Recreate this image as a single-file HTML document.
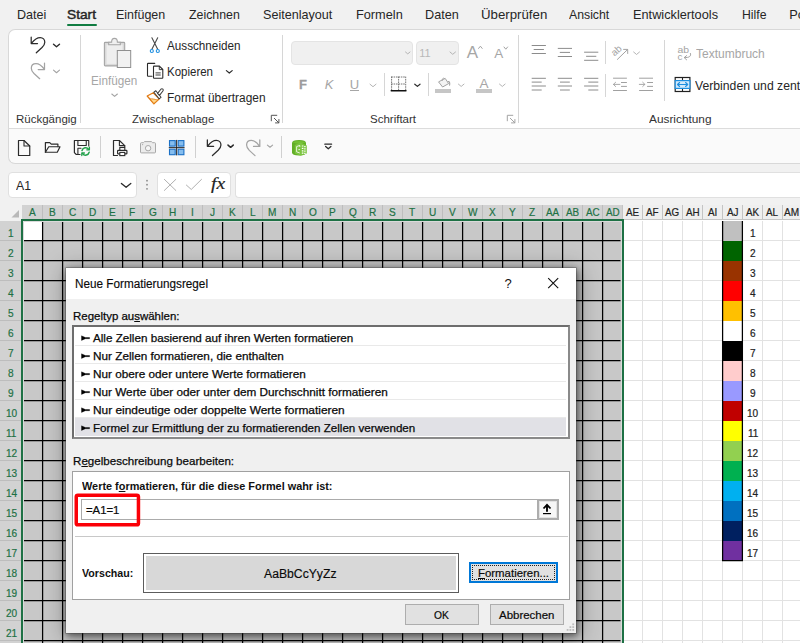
<!DOCTYPE html>
<html lang="de"><head><meta charset="utf-8"><title>Excel - Neue Formatierungsregel</title>
<style>
html,body{margin:0;padding:0;}
html{width:800px;height:643px;overflow:hidden;}
body{width:800px;height:643px;overflow:hidden;position:relative;background:#f1f1f1;font-family:"Liberation Sans",sans-serif;}
#app div{position:absolute;box-sizing:border-box;}
#dlg div{position:absolute;box-sizing:border-box;}
.t{position:absolute;white-space:nowrap;line-height:1;transform-origin:0 0;display:inline-block;}
svg.ov{position:absolute;left:0;top:0;}
#root{position:absolute;left:0;top:0;width:800px;height:643px;overflow:hidden;contain:paint;}
</style></head><body><div id="root">
<div id="app">
<div style="left:8px;top:29px;width:792px;height:100px;background:#fff;border:1px solid #d8d8d8;border-right:0;border-radius:7px 0 0 0;"></div>
<div style="left:8px;top:128px;width:792px;height:36px;background:#fafafa;border:1px solid #d8d8d8;border-right:0;border-top:1px solid #dcdcdc;border-radius:0 0 0 7px;"></div>
<div style="left:67px;top:24px;width:30px;height:2px;background:#107c41;border-radius:1px;"></div>
<div style="left:80px;top:35px;width:1px;height:88px;background:#d6d6d6;"></div>
<div style="left:282px;top:35px;width:1px;height:88px;background:#d6d6d6;"></div>
<div style="left:518px;top:35px;width:1px;height:88px;background:#d6d6d6;"></div>
<div style="left:384px;top:73px;width:1px;height:23px;background:#d6d6d6;"></div>
<div style="left:428px;top:73px;width:1px;height:23px;background:#d6d6d6;"></div>
<div style="left:605px;top:41px;width:1px;height:23px;background:#d6d6d6;"></div>
<div style="left:605px;top:74px;width:1px;height:23px;background:#d6d6d6;"></div>
<div style="left:664px;top:40px;width:1px;height:61px;background:#d6d6d6;"></div>
<div style="left:291px;top:41px;width:122px;height:24px;background:#f0f0f0;border:1px solid #e4e4e4;border-radius:4px;"></div>
<div style="left:416px;top:41px;width:43px;height:24px;background:#f0f0f0;border:1px solid #e4e4e4;border-radius:4px;"></div>
<div style="left:350px;top:90px;width:9px;height:1px;background:#a6a6a6;"></div>
<div style="left:476px;top:89px;width:16px;height:4px;background:#c6c6c6;"></div>
<div style="left:435px;top:89px;width:16px;height:4px;background:#c6c6c6;"></div>
<div style="left:8px;top:172px;width:129px;height:26px;background:#fff;border:1px solid #e0e0e0;border-radius:4px;"></div>
<div style="left:157px;top:172px;width:74px;height:26px;background:#fff;border:1px solid #e0e0e0;border-radius:4px;"></div>
<div style="left:235px;top:172px;width:565px;height:26px;background:#fff;border:1px solid #e0e0e0;border-right:0;border-radius:4px 0 0 4px;"></div>
<div style="left:22px;top:205px;width:601px;height:15px;background:#d2d2d2;"></div>
<div style="left:623px;top:205px;width:177px;height:15px;background:#efefef;"></div>
<div style="left:624px;top:219px;width:176px;height:2px;background:#c6c6c6;"></div>
<div style="left:0px;top:221px;width:22px;height:422px;background:#d2d2d2;"></div>
<div style="left:22px;top:220px;width:601px;height:423px;background:#c8c8c8;"></div>
<div style="left:23px;top:221px;width:19px;height:19px;background:#fff;"></div>
<div style="left:624px;top:220px;width:176px;height:423px;background:#fff;"></div>
<div style="left:100px;top:136px;width:1px;height:22px;background:#d0d0d0;"></div>
<div style="left:195px;top:136px;width:1px;height:22px;background:#d0d0d0;"></div>
<div style="left:281px;top:136px;width:1px;height:22px;background:#d0d0d0;"></div>
</div>
<svg class="ov" width="800" height="643" viewBox="0 0 800 643">
<path d="M19 210 L19 217.5 L11.5 217.5 Z" fill="#b9b9b9"/>
<path d="M42.5 205V220M62.5 205V220M82.5 205V220M102.5 205V220M122.5 205V220M142.5 205V220M162.5 205V220M182.5 205V220M202.5 205V220M222.5 205V220M242.5 205V220M262.5 205V220M282.5 205V220M302.5 205V220M322.5 205V220M342.5 205V220M362.5 205V220M382.5 205V220M402.5 205V220M422.5 205V220M442.5 205V220M462.5 205V220M482.5 205V220M502.5 205V220M522.5 205V220M542.5 205V220M562.5 205V220M582.5 205V220M602.5 205V220" stroke="#bdbdbd" stroke-width="1" fill="none"/>
<path d="M622.5 205V220M642.5 205V220M662.5 205V220M682.5 205V220M702.5 205V220M722.5 205V220M742.5 205V220M762.5 205V220M782.5 205V220M802.5 205V220" stroke="#c4c4c4" stroke-width="1" fill="none"/>
<path d="M0 240.5H21M0 260.5H21M0 280.5H21M0 300.5H21M0 320.5H21M0 340.5H21M0 360.5H21M0 380.5H21M0 400.5H21M0 420.5H21M0 440.5H21M0 460.5H21M0 480.5H21M0 500.5H21M0 520.5H21M0 540.5H21M0 560.5H21M0 580.5H21M0 600.5H21M0 620.5H21M0 640.5H21" stroke="#bdbdbd" stroke-width="1" fill="none"/>
<path d="M642.5 221V643M662.5 221V643M682.5 221V643M702.5 221V643M722.5 221V643M742.5 221V643M762.5 221V643M782.5 221V643M802.5 221V643M624 240.5H800M624 260.5H800M624 280.5H800M624 300.5H800M624 320.5H800M624 340.5H800M624 360.5H800M624 380.5H800M624 400.5H800M624 420.5H800M624 440.5H800M624 460.5H800M624 480.5H800M624 500.5H800M624 520.5H800M624 540.5H800M624 560.5H800M624 580.5H800M624 600.5H800M624 620.5H800M624 640.5H800" stroke="#e2e2e2" stroke-width="1" fill="none"/>
<path d="M42.6 222V643M62.6 222V643M82.6 222V643M102.6 222V643M122.6 222V643M142.6 222V643M162.6 222V643M182.6 222V643M202.6 222V643M222.6 222V643M242.6 222V643M262.6 222V643M282.6 222V643M302.6 222V643M322.6 222V643M342.6 222V643M362.6 222V643M382.6 222V643M402.6 222V643M422.6 222V643M442.6 222V643M462.6 222V643M482.6 222V643M502.6 222V643M522.6 222V643M542.6 222V643M562.6 222V643M582.6 222V643M602.6 222V643M24 240.6H620.5M24 260.6H620.5M24 280.6H620.5M24 300.6H620.5M24 320.6H620.5M24 340.6H620.5M24 360.6H620.5M24 380.6H620.5M24 400.6H620.5M24 420.6H620.5M24 440.6H620.5M24 460.6H620.5M24 480.6H620.5M24 500.6H620.5M24 520.6H620.5M24 540.6H620.5M24 560.6H620.5M24 580.6H620.5M24 600.6H620.5M24 620.6H620.5M24 640.6H620.5" stroke="#000" stroke-width="1.25" fill="none"/>
<path d="M23.5 643V221.5H621.5V643" stroke="#dadada" stroke-width="1" fill="none"/>
<path d="M22 643V220H623V643" stroke="#1e7145" stroke-width="2" fill="none"/>
<rect x="723" y="221" width="19.4" height="20.2" fill="#c0c0c0"/>
<rect x="723" y="241" width="19.4" height="20.2" fill="#006400"/>
<rect x="723" y="261" width="19.4" height="20.2" fill="#993300"/>
<rect x="723" y="281" width="19.4" height="20.2" fill="#ff0000"/>
<rect x="723" y="301" width="19.4" height="20.2" fill="#ffc000"/>
<rect x="723" y="321" width="19.4" height="20.2" fill="#ffffff"/>
<rect x="723" y="341" width="19.4" height="20.2" fill="#000000"/>
<rect x="723" y="361" width="19.4" height="20.2" fill="#ffcccc"/>
<rect x="723" y="381" width="19.4" height="20.2" fill="#9999ff"/>
<rect x="723" y="401" width="19.4" height="20.2" fill="#c00000"/>
<rect x="723" y="421" width="19.4" height="20.2" fill="#ffff00"/>
<rect x="723" y="441" width="19.4" height="20.2" fill="#92d050"/>
<rect x="723" y="461" width="19.4" height="20.2" fill="#00b050"/>
<rect x="723" y="481" width="19.4" height="20.2" fill="#00b0f0"/>
<rect x="723" y="501" width="19.4" height="20.2" fill="#0070c0"/>
<rect x="723" y="521" width="19.4" height="20.2" fill="#002060"/>
<rect x="723" y="541" width="19.4" height="19.2" fill="#7030a0"/>
<path d="M722.6 221V561M742.4 221V561M722 560.5H743" stroke="#000" stroke-width="1.25" fill="none"/>
<path d="M31.2 37.2V43.5H37.5M31.6 43.2C34 40 37 37.5 40.2 37.5C43 37.5 44.8 39.6 44.8 42.2C44.8 44.5 43.5 46 42 47.5L36.3 52.8" stroke="#2b2b2b" stroke-width="1.25" fill="none" stroke-linecap="round" stroke-linejoin="round" />
<path d="M53.5 44.2L56.5 46.720000000000006L59.5 44.2" stroke="#2b2b2b" stroke-width="1.4" fill="none" stroke-linecap="round" stroke-linejoin="round" />
<path d="M44.5 63V69.5H38.2M44.2 69.2C42 66 39 63.5 36 63.5C33 63.5 31.3 65.6 31.3 68.2C31.3 70.5 32.5 72 34 73.5L39.7 78.7" stroke="#a3a3a3" stroke-width="1.25" fill="none" stroke-linecap="round" stroke-linejoin="round" />
<path d="M53.5 70.2L56.5 72.72L59.5 70.2" stroke="#a3a3a3" stroke-width="1.1" fill="none" stroke-linecap="round" stroke-linejoin="round" />
<path d="M207.35 139.95V146.25H213.65M207.75 145.95C210.15 142.75 213.15 140.25 216.35000000000002 140.25C219.15 140.25 220.95 142.35 220.95 144.95C220.95 147.25 219.65 148.75 218.15 150.25L212.45 155.55" stroke="#2b2b2b" stroke-width="1.25" fill="none" stroke-linecap="round" stroke-linejoin="round" />
<path d="M228 145.1L230.625 147.305L233.25 145.1" stroke="#2b2b2b" stroke-width="1.5" fill="none" stroke-linecap="round" stroke-linejoin="round" />
<path d="M259.8 139.9V146.4H253.5M259.5 146.10000000000002C257.3 142.9 254.3 140.4 251.3 140.4C248.3 140.4 246.60000000000002 142.5 246.60000000000002 145.10000000000002C246.60000000000002 147.4 247.8 148.9 249.3 150.4L255.0 155.60000000000002" stroke="#a3a3a3" stroke-width="1.25" fill="none" stroke-linecap="round" stroke-linejoin="round" />
<path d="M267.4 145.1L270.0 147.28400000000002L272.6 145.1" stroke="#a3a3a3" stroke-width="1.1" fill="none" stroke-linecap="round" stroke-linejoin="round" />
<rect x="104.4" y="42.4" width="20.3" height="23.5" rx="0.8" fill="#d9d9d9" stroke="#a6a6a6" stroke-width="1.1"/>
<rect x="106.5" y="44.6" width="16.1" height="19.3" fill="#eeeeee"/>
<path d="M108.7 44.8V42.2H111.6C111.6 40.2 112.8 38.4 114.5 38.4C116.2 38.4 117.4 40.2 117.4 42.2H120.3V44.8Z" fill="#f0f0f0" stroke="#a6a6a6" stroke-width="1.1"/>
<rect x="117.3" y="50.5" width="13.4" height="17" fill="#f1f1f1" stroke="#8f8f8f" stroke-width="1"/>
<path d="M111.8 94L114.6 96.352L117.4 94" stroke="#a3a3a3" stroke-width="1.1" fill="none" stroke-linecap="round" stroke-linejoin="round" />
<path d="M151.9 37.8L157.7 49.2M157.7 37.8L151.9 49.2" stroke="#4a4a4a" stroke-width="1.1" fill="none" stroke-linecap="round" stroke-linejoin="round" />
<circle cx="151.8" cy="51" r="1.55" fill="#fff" stroke="#1e8fe0" stroke-width="1.1"/><circle cx="157.8" cy="51" r="1.55" fill="#fff" stroke="#1e8fe0" stroke-width="1.1"/>
<path d="M154.7 63.4H148.1Q147.5 63.4 147.5 64V75.7Q147.5 76.3 148.1 76.3H152" stroke="#2b2b2b" stroke-width="1.1" fill="none" stroke-linecap="round" stroke-linejoin="round" />
<path d="M153.5 66.7Q153.5 66.1 154.1 66.1H159.4L162.8 69.5V77.7Q162.8 78.3 162.2 78.3H154.1Q153.5 78.3 153.5 77.7Z" stroke="#2b2b2b" stroke-width="1.1" fill="#fff" stroke-linecap="round" stroke-linejoin="round" />
<path d="M159.3 66.3V69.6H162.6" stroke="#2b2b2b" stroke-width="0.9" fill="none" stroke-linecap="round" stroke-linejoin="round" />
<path d="M155.9 72.9H160.3M155.9 75H160.3" stroke="#2b2b2b" stroke-width="0.9" fill="none" stroke-linecap="round" stroke-linejoin="round" />
<path d="M226.4 70.6L229.3 73.03599999999999L232.2 70.6" stroke="#2b2b2b" stroke-width="1.2" fill="none" stroke-linecap="round" stroke-linejoin="round" />
<path d="M153.3 92.7L147.2 96L153.9 103.7L159.1 98.9Z" fill="#fff" stroke="#e27a12" stroke-width="1.3" stroke-linejoin="round"/>
<path d="M150 98.9C152.4 98.6 155.2 99.4 157.8 100.1L153.9 103.5Z" fill="#ffd78a" stroke="#e27a12" stroke-width="0.8" stroke-linejoin="round"/>
<path d="M153.9 92.2L155.8 90.7L161 97.3L159.1 98.8Z" fill="#fff" stroke="#3c3c3c" stroke-width="1.05" stroke-linejoin="round"/>
<path d="M157.6 93.4L160.9 89.2Q161.9 88.3 162.9 89.1Q163.7 90 162.9 91L159.5 95.3Z" fill="#fff" stroke="#3c3c3c" stroke-width="1.05" stroke-linejoin="round"/>
<path d="M271.3 120.8V115.3H276.8" stroke="#555" stroke-width="1" fill="none" stroke-linecap="round" stroke-linejoin="round" />
<path d="M274.3 118.3L278.8 122.8M275.5 122.89999999999999H278.90000000000003V119.5" stroke="#555" stroke-width="1" fill="none" stroke-linecap="round" stroke-linejoin="round" />
<path d="M507.3 120.8V115.3H512.8" stroke="#a3a3a3" stroke-width="1" fill="none" stroke-linecap="round" stroke-linejoin="round" />
<path d="M510.3 118.3L514.8 122.8M511.5 122.89999999999999H514.9V119.5" stroke="#a3a3a3" stroke-width="1" fill="none" stroke-linecap="round" stroke-linejoin="round" />
<path d="M405.5 52L407.75 53.89L410 52" stroke="#adadad" stroke-width="0.9" fill="none" stroke-linecap="round" stroke-linejoin="round" />
<path d="M450 52L452.75 54.31L455.5 52" stroke="#adadad" stroke-width="0.9" fill="none" stroke-linecap="round" stroke-linejoin="round" />
<path d="M370 84.2L373.0 86.72L376 84.2" stroke="#adadad" stroke-width="0.9" fill="none" stroke-linecap="round" stroke-linejoin="round" />
<path d="M478.6 48.4L480.4 46.199999999999996L482.2 48.4" stroke="#a3a3a3" stroke-width="1.0" fill="none" stroke-linecap="round" stroke-linejoin="round" />
<path d="M504 47L505.8 49.2L507.6 47" stroke="#a3a3a3" stroke-width="1.0" fill="none" stroke-linecap="round" stroke-linejoin="round" />
<path d="M391.6 77H405.7M391.6 84H405.7M391.6 77V90M398.6 77V90M405.7 77V90" stroke="#666" stroke-width="0.9" fill="none" stroke-linecap="round" stroke-linejoin="round" stroke-dasharray="0.8 1.6" stroke-linecap="butt"/>
<path d="M391.2 90.8H406" stroke="#111" stroke-width="1.4" fill="none" stroke-linecap="round" stroke-linejoin="round" />
<path d="M414.8 84.2L417.4 86.384L420 84.2" stroke="#2b2b2b" stroke-width="1.25" fill="none" stroke-linecap="round" stroke-linejoin="round" />
<path d="M441.3 80.4L445.2 78.4L448.6 83.6L442.6 87L438.8 82.2Z" stroke="#a3a3a3" stroke-width="1.0" fill="#f4f4f4" stroke-linecap="round" stroke-linejoin="round" />
<path d="M442.2 80.6C442 78.4 443.4 77.4 444.6 78.6" stroke="#a3a3a3" stroke-width="0.9" fill="none" stroke-linecap="round" stroke-linejoin="round" />
<path d="M448.2 81.6C449.6 81 450 83.4 449.6 85.2" stroke="#a3a3a3" stroke-width="1.1" fill="none" stroke-linecap="round" stroke-linejoin="round" />
<path d="M458.4 84.1L461.2 86.452L464 84.1" stroke="#adadad" stroke-width="0.9" fill="none" stroke-linecap="round" stroke-linejoin="round" />
<path d="M499.5 84.1L502.3 86.452L505.1 84.1" stroke="#adadad" stroke-width="0.9" fill="none" stroke-linecap="round" stroke-linejoin="round" />
<path d="M531.7 45.5H545.9000000000001" stroke="#8c8c8c" stroke-width="1.0" fill="none"/>
<path d="M533.7 49.5H543.9000000000001" stroke="#8c8c8c" stroke-width="1.0" fill="none"/>
<path d="M531.7 53.5H545.9000000000001" stroke="#8c8c8c" stroke-width="1.0" fill="none"/>
<path d="M557.8 48.4H572.0" stroke="#8c8c8c" stroke-width="1.0" fill="none"/>
<path d="M559.8 52.4H570.0" stroke="#8c8c8c" stroke-width="1.0" fill="none"/>
<path d="M557.8 56.5H572.0" stroke="#8c8c8c" stroke-width="1.0" fill="none"/>
<path d="M584.1 52.2H598.3000000000001" stroke="#8c8c8c" stroke-width="1.0" fill="none"/>
<path d="M586.1 56.3H596.3000000000001" stroke="#8c8c8c" stroke-width="1.0" fill="none"/>
<path d="M584.1 60.3H598.3000000000001" stroke="#8c8c8c" stroke-width="1.0" fill="none"/>
<path d="M531.7 78.3H545.9000000000001" stroke="#8c8c8c" stroke-width="1.0" fill="none"/>
<path d="M531.7 82.1H541.7" stroke="#8c8c8c" stroke-width="1.0" fill="none"/>
<path d="M531.7 86H545.9000000000001" stroke="#8c8c8c" stroke-width="1.0" fill="none"/>
<path d="M531.7 90H541.7" stroke="#8c8c8c" stroke-width="1.0" fill="none"/>
<path d="M557.8 78.3H572.0" stroke="#8c8c8c" stroke-width="1.0" fill="none"/>
<path d="M560.0 82.1H569.8" stroke="#8c8c8c" stroke-width="1.0" fill="none"/>
<path d="M557.8 86H572.0" stroke="#8c8c8c" stroke-width="1.0" fill="none"/>
<path d="M560.0 90H569.8" stroke="#8c8c8c" stroke-width="1.0" fill="none"/>
<path d="M584.1 78.3H598.3000000000001" stroke="#8c8c8c" stroke-width="1.0" fill="none"/>
<path d="M588.3000000000001 82.1H598.3000000000001" stroke="#8c8c8c" stroke-width="1.0" fill="none"/>
<path d="M584.1 86H598.3000000000001" stroke="#8c8c8c" stroke-width="1.0" fill="none"/>
<path d="M588.3000000000001 90H598.3000000000001" stroke="#8c8c8c" stroke-width="1.0" fill="none"/>
<path d="M617.4 59.4L627.5 49.6M623.6 49.4H627.7V53.5" stroke="#a3a3a3" stroke-width="1.0" fill="none" stroke-linecap="round" stroke-linejoin="round" />
<text x="0" y="0" transform="translate(614.6 56.6) rotate(-42)" font-family="Liberation Sans, sans-serif" font-size="9.6" fill="#a3a3a3">ab</text>
<path d="M633.6 52L636.55 54.47799999999999L639.5 52" stroke="#adadad" stroke-width="0.9" fill="none" stroke-linecap="round" stroke-linejoin="round" />
<path d="M613.05 78.2H626.9" stroke="#a0a0a0" stroke-width="1.0" fill="none"/>
<path d="M613.05 90.5H626.9" stroke="#a0a0a0" stroke-width="1.0" fill="none"/>
<path d="M621 82.5H626.9" stroke="#a0a0a0" stroke-width="1.0" fill="none"/>
<path d="M621 86.4H626.9" stroke="#a0a0a0" stroke-width="1.0" fill="none"/>
<path d="M619.9 84.4H613.5M615.6 82.3L613.4 84.4L615.6 86.5" stroke="#a0a0a0" stroke-width="0.9" fill="none" stroke-linecap="round" stroke-linejoin="round" />
<path d="M639.1 78.2H653" stroke="#a0a0a0" stroke-width="1.0" fill="none"/>
<path d="M639.1 90.5H653" stroke="#a0a0a0" stroke-width="1.0" fill="none"/>
<path d="M647.1 82.5H653" stroke="#a0a0a0" stroke-width="1.0" fill="none"/>
<path d="M647.1 86.4H653" stroke="#a0a0a0" stroke-width="1.0" fill="none"/>
<path d="M639.3 84.4H644.8M642.7 82.3L644.9 84.4L642.7 86.5" stroke="#a0a0a0" stroke-width="0.9" fill="none" stroke-linecap="round" stroke-linejoin="round" />
<text x="677.4" y="53.1" font-family="Liberation Sans, sans-serif" font-size="9.8" fill="#a3a3a3" textLength="11.6" lengthAdjust="spacingAndGlyphs">ab</text>
<text x="677.4" y="60" font-family="Liberation Sans, sans-serif" font-size="9.8" fill="#a3a3a3">c</text>
<path d="M690.4 53.4C691.4 56 689.6 57.8 684.4 57.6M686.6 55.6L684.2 57.6L686.6 59.8" stroke="#a3a3a3" stroke-width="1.0" fill="none" stroke-linecap="round" stroke-linejoin="round" />
<rect x="675.2" y="77.5" width="14.7" height="14" fill="#fff" stroke="#222" stroke-width="1.2"/>
<path d="M682.5 77.5V80.5M682.5 88.4V91.5" stroke="#222" stroke-width="1.1" fill="none" stroke-linecap="round" stroke-linejoin="round" />
<rect x="675.2" y="80.6" width="14.7" height="7.8" fill="#d4eafb" stroke="#1e8fe0" stroke-width="1.2"/>
<path d="M677.6 84.5H687.6M679.6 82.5L677.5 84.5L679.6 86.5M685.6 82.5L687.7 84.5L685.6 86.5" stroke="#1e8fe0" stroke-width="1.1" fill="none" stroke-linecap="round" stroke-linejoin="round" />
<path d="M18.5 140.5H24L29.75 146V155.5H18.5Z" stroke="#2b2b2b" stroke-width="1.2" fill="none" stroke-linecap="round" stroke-linejoin="round" />
<path d="M24 140.6V146H29.7" stroke="#2b2b2b" stroke-width="1.1" fill="none" stroke-linecap="round" stroke-linejoin="round" />
<path d="M45.4 152.2V142.6H49.75L51.25 144.1H57.9V146.6" stroke="#2b2b2b" stroke-width="1.2" fill="none" stroke-linecap="round" stroke-linejoin="round" />
<path d="M45.4 152.25L48.75 146.75H60L57.25 152.25Z" stroke="#2b2b2b" stroke-width="1.2" fill="none" stroke-linecap="round" stroke-linejoin="round" />
<path d="M84 140.5H74.4V152.6L76.3 154.5H80" stroke="#2b2b2b" stroke-width="1.2" fill="none" stroke-linecap="round" stroke-linejoin="round" />
<path d="M88.75 140.5V146M84 140.5H88.75M77.9 140.5V145.5H86.25V140.5M77.9 154.5V148.25H81" stroke="#2b2b2b" stroke-width="1.1" fill="none" stroke-linecap="round" stroke-linejoin="round" />
<path d="M82 150.6A3.7 3.7 0 0 1 88.6 149.2M89.2 152.2A3.7 3.7 0 0 1 82.6 153.6" stroke="#21a04a" stroke-width="1.5" fill="none" stroke-linecap="round" stroke-linejoin="round" />
<path d="M89.4 147.2V149.8H86.8M81.8 155.6V153H84.4" stroke="#21a04a" stroke-width="1.3" fill="none" stroke-linecap="round" stroke-linejoin="round" />
<path d="M117.5 155.5H113.5V140.5H119.4L124.75 145.6V146.8" stroke="#2b2b2b" stroke-width="1.2" fill="none" stroke-linecap="round" stroke-linejoin="round" />
<path d="M119.4 140.6V145.6H124.7" stroke="#2b2b2b" stroke-width="1.1" fill="none" stroke-linecap="round" stroke-linejoin="round" />
<rect x="119.8" y="147.5" width="5" height="3.4" fill="#fff" stroke="#2b2b2b" stroke-width="1.1"/>
<rect x="117.6" y="150.4" width="9.3" height="3.4" rx="0.6" fill="#fff" stroke="#2b2b2b" stroke-width="1.2"/>
<rect x="119.8" y="152.4" width="5" height="3.2" fill="#fff" stroke="#2b2b2b" stroke-width="1.1"/>
<path d="M140.5 143.6Q140.5 142.7 141.4 142.7H143.4L144.6 141.6H151.4L152.6 142.7H154.6Q155.5 142.7 155.5 143.6V152Q155.5 152.9 154.6 152.9H141.4Q140.5 152.9 140.5 152Z" fill="#ececec" stroke="#a8a8a8" stroke-width="1"/>
<circle cx="148.1" cy="148.2" r="2.7" fill="#f6f6f6" stroke="#a8a8a8" stroke-width="1"/><circle cx="142.6" cy="144.6" r="0.6" fill="#a8a8a8"/>
<rect x="169.5" y="140.6" width="5.7" height="5.5" fill="#85bdee" stroke="#1b70c6" stroke-width="1.1"/>
<rect x="178.2" y="140.6" width="5.7" height="5.5" fill="#85bdee" stroke="#1b70c6" stroke-width="1.1"/>
<rect x="169.5" y="149.2" width="5.7" height="5.5" fill="#85bdee" stroke="#1b70c6" stroke-width="1.1"/>
<rect x="178.2" y="149.2" width="5.7" height="5.5" fill="#85bdee" stroke="#1b70c6" stroke-width="1.1"/>
<path d="M176.65 140.3V155M169.2 147.65H184.2" stroke="#222" stroke-width="1.0" fill="none" stroke-linecap="round" stroke-linejoin="round" />
<path d="M292 143Q292 140 299 140Q306 140 306 143V152.6Q306 155.6 299 155.6Q292 155.6 292 152.6Z" fill="#62ae26"/>
<path d="M292.6 142.2Q299 139.6 305.6 142.2Q299 145.2 292.6 142.2Z" fill="#74c034"/>
<path d="M294.8 145L300.6 142.6L306.8 145.6V153.4L300.6 155.8L294.8 153.4Z" fill="#7cc540"/>
<path d="M296.6 146.6L299.8 145.4V147M296.6 146.6V151.8L299.8 153M298.4 149.6H300" stroke="#fff" stroke-width="0.8" fill="none"/>
<path d="M301.8 146H303.4M304.2 146.6H305.6M301.8 148.4H303.4M304.2 148.9H305.6M301.8 150.8H303.4M304.2 151.2H305.6M301.8 153.2H303.4M304.2 153.4H305.6" stroke="#fff" stroke-width="1.2" fill="none"/>
<path d="M324.8 144.2H331.6" stroke="#2b2b2b" stroke-width="1.2" fill="none" stroke-linecap="round" stroke-linejoin="round" />
<path d="M325.65 146.5L328.275 148.705L330.9 146.5" stroke="#2b2b2b" stroke-width="1.3" fill="none" stroke-linecap="round" stroke-linejoin="round" />
<path d="M121.4 183.4L126.10000000000001 187.348L130.8 183.4" stroke="#2b2b2b" stroke-width="1.3" fill="none" stroke-linecap="round" stroke-linejoin="round" />
<circle cx="147" cy="180.7" r="0.9" fill="#8a8a8a"/><circle cx="147" cy="184.7" r="0.9" fill="#8a8a8a"/><circle cx="147" cy="188.8" r="0.9" fill="#8a8a8a"/>
<path d="M164.4 179.4L175.8 190.4M175.8 179.4L164.4 190.4" stroke="#b0b0b0" stroke-width="1.0" fill="none" stroke-linecap="round" stroke-linejoin="round" />
<path d="M186.4 185.1L191.25 189.45L201.5 179.4" stroke="#b0b0b0" stroke-width="1.0" fill="none" stroke-linecap="round" stroke-linejoin="round" />
</svg>
<span class="t" style="left:16.50px;top:9.25px;font-size:12.8px;color:#262626;font-weight:normal;font-style:normal;font-family:'Liberation Sans', sans-serif;transform:scaleX(0.9791);">Datei</span>
<span class="t" style="left:67.00px;top:9.25px;font-size:12.8px;color:#262626;font-weight:normal;font-style:normal;font-family:'Liberation Sans', sans-serif;transform:scaleX(1.0728);-webkit-text-stroke:0.45px #262626;">Start</span>
<span class="t" style="left:116.25px;top:9.25px;font-size:12.8px;color:#262626;font-weight:normal;font-style:normal;font-family:'Liberation Sans', sans-serif;transform:scaleX(0.9746);">Einfügen</span>
<span class="t" style="left:188.75px;top:9.25px;font-size:12.8px;color:#262626;font-weight:normal;font-style:normal;font-family:'Liberation Sans', sans-serif;transform:scaleX(0.9638);">Zeichnen</span>
<span class="t" style="left:263.25px;top:9.25px;font-size:12.8px;color:#262626;font-weight:normal;font-style:normal;font-family:'Liberation Sans', sans-serif;transform:scaleX(0.9831);">Seitenlayout</span>
<span class="t" style="left:356.25px;top:9.25px;font-size:12.8px;color:#262626;font-weight:normal;font-style:normal;font-family:'Liberation Sans', sans-serif;transform:scaleX(0.9960);">Formeln</span>
<span class="t" style="left:425.00px;top:9.25px;font-size:12.8px;color:#262626;font-weight:normal;font-style:normal;font-family:'Liberation Sans', sans-serif;transform:scaleX(0.9881);">Daten</span>
<span class="t" style="left:480.50px;top:9.25px;font-size:12.8px;color:#262626;font-weight:normal;font-style:normal;font-family:'Liberation Sans', sans-serif;transform:scaleX(1.0347);">Überprüfen</span>
<span class="t" style="left:569.25px;top:9.25px;font-size:12.8px;color:#262626;font-weight:normal;font-style:normal;font-family:'Liberation Sans', sans-serif;transform:scaleX(0.9590);">Ansicht</span>
<span class="t" style="left:633.25px;top:9.25px;font-size:12.8px;color:#262626;font-weight:normal;font-style:normal;font-family:'Liberation Sans', sans-serif;transform:scaleX(0.9960);">Entwicklertools</span>
<span class="t" style="left:741.75px;top:9.25px;font-size:12.8px;color:#262626;font-weight:normal;font-style:normal;font-family:'Liberation Sans', sans-serif;transform:scaleX(0.9567);">Hilfe</span>
<span class="t" style="left:789.25px;top:9.25px;font-size:12.8px;color:#262626;font-weight:normal;font-style:normal;font-family:'Liberation Sans', sans-serif;">Power</span>
<span class="t" style="left:15.50px;top:113.50px;font-size:11.5px;color:#333;font-weight:normal;font-style:normal;font-family:'Liberation Sans', sans-serif;transform:scaleX(1.0003);">Rückgängig</span>
<span class="t" style="left:132.00px;top:113.50px;font-size:11.5px;color:#333;font-weight:normal;font-style:normal;font-family:'Liberation Sans', sans-serif;transform:scaleX(0.9897);">Zwischenablage</span>
<span class="t" style="left:369.50px;top:113.50px;font-size:11.5px;color:#333;font-weight:normal;font-style:normal;font-family:'Liberation Sans', sans-serif;transform:scaleX(0.9997);">Schriftart</span>
<span class="t" style="left:649.25px;top:113.50px;font-size:11.5px;color:#333;font-weight:normal;font-style:normal;font-family:'Liberation Sans', sans-serif;transform:scaleX(1.0291);">Ausrichtung</span>
<span class="t" style="left:91.25px;top:74.50px;font-size:12.5px;color:#a6a6a6;font-weight:normal;font-style:normal;font-family:'Liberation Sans', sans-serif;transform:scaleX(0.9370);">Einfügen</span>
<span class="t" style="left:167.00px;top:40.00px;font-size:12.5px;color:#262626;font-weight:normal;font-style:normal;font-family:'Liberation Sans', sans-serif;transform:scaleX(0.9359);">Ausschneiden</span>
<span class="t" style="left:167.00px;top:66.25px;font-size:12.5px;color:#262626;font-weight:normal;font-style:normal;font-family:'Liberation Sans', sans-serif;transform:scaleX(0.9191);">Kopieren</span>
<span class="t" style="left:167.00px;top:92.00px;font-size:12.5px;color:#262626;font-weight:normal;font-style:normal;font-family:'Liberation Sans', sans-serif;transform:scaleX(0.9514);">Format übertragen</span>
<span class="t" style="left:419.29px;top:47.80px;font-size:11px;color:#b8b8b8;font-weight:normal;font-style:normal;font-family:'Liberation Sans', sans-serif;">11</span>
<span class="t" style="left:299.02px;top:77.75px;font-size:13px;color:#9c9c9c;font-weight:bold;font-style:normal;font-family:'Liberation Sans', sans-serif;-webkit-text-stroke:0.3px #9c9c9c;">F</span>
<span class="t" style="left:324.66px;top:77.75px;font-size:13px;color:#a6a6a6;font-weight:normal;font-style:italic;font-family:'Liberation Sans', sans-serif;">K</span>
<span class="t" style="left:349.70px;top:77.75px;font-size:13px;color:#a6a6a6;font-weight:normal;font-style:normal;font-family:'Liberation Sans', sans-serif;">U</span>
<span class="t" style="left:466.63px;top:44.00px;font-size:17px;color:#a6a6a6;font-weight:normal;font-style:normal;font-family:'Liberation Sans', sans-serif;">A</span>
<span class="t" style="left:494.29px;top:47.00px;font-size:13.5px;color:#a6a6a6;font-weight:normal;font-style:normal;font-family:'Liberation Sans', sans-serif;">A</span>
<span class="t" style="left:479.49px;top:76.50px;font-size:13.5px;color:#a6a6a6;font-weight:normal;font-style:normal;font-family:'Liberation Sans', sans-serif;">A</span>
<span class="t" style="left:695.75px;top:48.25px;font-size:12.5px;color:#a6a6a6;font-weight:normal;font-style:normal;font-family:'Liberation Sans', sans-serif;transform:scaleX(0.9607);">Textumbruch</span>
<span class="t" style="left:695.00px;top:80.00px;font-size:12.5px;color:#262626;font-weight:normal;font-style:normal;font-family:'Liberation Sans', sans-serif;transform:scaleX(0.9760);">Verbinden und zentrieren</span>
<span class="t" style="left:15.50px;top:180.00px;font-size:12.3px;color:#262626;font-weight:normal;font-style:normal;font-family:'Liberation Sans', sans-serif;transform:scaleX(0.9969);">A1</span>
<span class="t" style="left:211.20px;top:175.20px;font-size:17.5px;color:#222;font-weight:normal;font-style:italic;font-family:'Liberation Serif', serif;transform:scaleX(1.1200);-webkit-text-stroke:0.2px #222;">fx</span>
<span class="t" style="left:29.14px;top:207.00px;font-size:10.6px;color:#1e7145;font-weight:normal;font-style:normal;font-family:'Liberation Sans', sans-serif;transform:scaleX(0.9500);-webkit-text-stroke:0.2px #1e7145;">A</span>
<span class="t" style="left:49.14px;top:207.00px;font-size:10.6px;color:#1e7145;font-weight:normal;font-style:normal;font-family:'Liberation Sans', sans-serif;transform:scaleX(0.9500);-webkit-text-stroke:0.2px #1e7145;">B</span>
<span class="t" style="left:68.86px;top:207.00px;font-size:10.6px;color:#1e7145;font-weight:normal;font-style:normal;font-family:'Liberation Sans', sans-serif;transform:scaleX(0.9500);-webkit-text-stroke:0.2px #1e7145;">C</span>
<span class="t" style="left:88.86px;top:207.00px;font-size:10.6px;color:#1e7145;font-weight:normal;font-style:normal;font-family:'Liberation Sans', sans-serif;transform:scaleX(0.9500);-webkit-text-stroke:0.2px #1e7145;">D</span>
<span class="t" style="left:109.14px;top:207.00px;font-size:10.6px;color:#1e7145;font-weight:normal;font-style:normal;font-family:'Liberation Sans', sans-serif;transform:scaleX(0.9500);-webkit-text-stroke:0.2px #1e7145;">E</span>
<span class="t" style="left:129.42px;top:207.00px;font-size:10.6px;color:#1e7145;font-weight:normal;font-style:normal;font-family:'Liberation Sans', sans-serif;transform:scaleX(0.9500);-webkit-text-stroke:0.2px #1e7145;">F</span>
<span class="t" style="left:148.58px;top:207.00px;font-size:10.6px;color:#1e7145;font-weight:normal;font-style:normal;font-family:'Liberation Sans', sans-serif;transform:scaleX(0.9500);-webkit-text-stroke:0.2px #1e7145;">G</span>
<span class="t" style="left:168.86px;top:207.00px;font-size:10.6px;color:#1e7145;font-weight:normal;font-style:normal;font-family:'Liberation Sans', sans-serif;transform:scaleX(0.9500);-webkit-text-stroke:0.2px #1e7145;">H</span>
<span class="t" style="left:191.10px;top:207.00px;font-size:10.6px;color:#1e7145;font-weight:normal;font-style:normal;font-family:'Liberation Sans', sans-serif;transform:scaleX(0.9500);-webkit-text-stroke:0.2px #1e7145;">I</span>
<span class="t" style="left:209.98px;top:207.00px;font-size:10.6px;color:#1e7145;font-weight:normal;font-style:normal;font-family:'Liberation Sans', sans-serif;transform:scaleX(0.9500);-webkit-text-stroke:0.2px #1e7145;">J</span>
<span class="t" style="left:229.14px;top:207.00px;font-size:10.6px;color:#1e7145;font-weight:normal;font-style:normal;font-family:'Liberation Sans', sans-serif;transform:scaleX(0.9500);-webkit-text-stroke:0.2px #1e7145;">K</span>
<span class="t" style="left:249.69px;top:207.00px;font-size:10.6px;color:#1e7145;font-weight:normal;font-style:normal;font-family:'Liberation Sans', sans-serif;transform:scaleX(0.9500);-webkit-text-stroke:0.2px #1e7145;">L</span>
<span class="t" style="left:268.31px;top:207.00px;font-size:10.6px;color:#1e7145;font-weight:normal;font-style:normal;font-family:'Liberation Sans', sans-serif;transform:scaleX(0.9500);-webkit-text-stroke:0.2px #1e7145;">M</span>
<span class="t" style="left:288.86px;top:207.00px;font-size:10.6px;color:#1e7145;font-weight:normal;font-style:normal;font-family:'Liberation Sans', sans-serif;transform:scaleX(0.9500);-webkit-text-stroke:0.2px #1e7145;">N</span>
<span class="t" style="left:308.58px;top:207.00px;font-size:10.6px;color:#1e7145;font-weight:normal;font-style:normal;font-family:'Liberation Sans', sans-serif;transform:scaleX(0.9500);-webkit-text-stroke:0.2px #1e7145;">O</span>
<span class="t" style="left:329.14px;top:207.00px;font-size:10.6px;color:#1e7145;font-weight:normal;font-style:normal;font-family:'Liberation Sans', sans-serif;transform:scaleX(0.9500);-webkit-text-stroke:0.2px #1e7145;">P</span>
<span class="t" style="left:348.58px;top:207.00px;font-size:10.6px;color:#1e7145;font-weight:normal;font-style:normal;font-family:'Liberation Sans', sans-serif;transform:scaleX(0.9500);-webkit-text-stroke:0.2px #1e7145;">Q</span>
<span class="t" style="left:368.86px;top:207.00px;font-size:10.6px;color:#1e7145;font-weight:normal;font-style:normal;font-family:'Liberation Sans', sans-serif;transform:scaleX(0.9500);-webkit-text-stroke:0.2px #1e7145;">R</span>
<span class="t" style="left:389.14px;top:207.00px;font-size:10.6px;color:#1e7145;font-weight:normal;font-style:normal;font-family:'Liberation Sans', sans-serif;transform:scaleX(0.9500);-webkit-text-stroke:0.2px #1e7145;">S</span>
<span class="t" style="left:409.42px;top:207.00px;font-size:10.6px;color:#1e7145;font-weight:normal;font-style:normal;font-family:'Liberation Sans', sans-serif;transform:scaleX(0.9500);-webkit-text-stroke:0.2px #1e7145;">T</span>
<span class="t" style="left:428.86px;top:207.00px;font-size:10.6px;color:#1e7145;font-weight:normal;font-style:normal;font-family:'Liberation Sans', sans-serif;transform:scaleX(0.9500);-webkit-text-stroke:0.2px #1e7145;">U</span>
<span class="t" style="left:449.14px;top:207.00px;font-size:10.6px;color:#1e7145;font-weight:normal;font-style:normal;font-family:'Liberation Sans', sans-serif;transform:scaleX(0.9500);-webkit-text-stroke:0.2px #1e7145;">V</span>
<span class="t" style="left:467.75px;top:207.00px;font-size:10.6px;color:#1e7145;font-weight:normal;font-style:normal;font-family:'Liberation Sans', sans-serif;transform:scaleX(0.9500);-webkit-text-stroke:0.2px #1e7145;">W</span>
<span class="t" style="left:489.14px;top:207.00px;font-size:10.6px;color:#1e7145;font-weight:normal;font-style:normal;font-family:'Liberation Sans', sans-serif;transform:scaleX(0.9500);-webkit-text-stroke:0.2px #1e7145;">X</span>
<span class="t" style="left:509.14px;top:207.00px;font-size:10.6px;color:#1e7145;font-weight:normal;font-style:normal;font-family:'Liberation Sans', sans-serif;transform:scaleX(0.9500);-webkit-text-stroke:0.2px #1e7145;">Y</span>
<span class="t" style="left:529.42px;top:207.00px;font-size:10.6px;color:#1e7145;font-weight:normal;font-style:normal;font-family:'Liberation Sans', sans-serif;transform:scaleX(0.9500);-webkit-text-stroke:0.2px #1e7145;">Z</span>
<span class="t" style="left:545.92px;top:207.00px;font-size:10.6px;color:#1e7145;font-weight:normal;font-style:normal;font-family:'Liberation Sans', sans-serif;transform:scaleX(0.9300);-webkit-text-stroke:0.2px #1e7145;">AA</span>
<span class="t" style="left:565.92px;top:207.00px;font-size:10.6px;color:#1e7145;font-weight:normal;font-style:normal;font-family:'Liberation Sans', sans-serif;transform:scaleX(0.9300);-webkit-text-stroke:0.2px #1e7145;">AB</span>
<span class="t" style="left:585.66px;top:207.00px;font-size:10.6px;color:#1e7145;font-weight:normal;font-style:normal;font-family:'Liberation Sans', sans-serif;transform:scaleX(0.9300);-webkit-text-stroke:0.2px #1e7145;">AC</span>
<span class="t" style="left:605.66px;top:207.00px;font-size:10.6px;color:#1e7145;font-weight:normal;font-style:normal;font-family:'Liberation Sans', sans-serif;transform:scaleX(0.9300);-webkit-text-stroke:0.2px #1e7145;">AD</span>
<span class="t" style="left:625.92px;top:207.00px;font-size:10.6px;color:#222;font-weight:normal;font-style:normal;font-family:'Liberation Sans', sans-serif;transform:scaleX(0.9300);-webkit-text-stroke:0.2px #222;">AE</span>
<span class="t" style="left:646.20px;top:207.00px;font-size:10.6px;color:#222;font-weight:normal;font-style:normal;font-family:'Liberation Sans', sans-serif;transform:scaleX(0.9300);-webkit-text-stroke:0.2px #222;">AF</span>
<span class="t" style="left:665.38px;top:207.00px;font-size:10.6px;color:#222;font-weight:normal;font-style:normal;font-family:'Liberation Sans', sans-serif;transform:scaleX(0.9300);-webkit-text-stroke:0.2px #222;">AG</span>
<span class="t" style="left:685.66px;top:207.00px;font-size:10.6px;color:#222;font-weight:normal;font-style:normal;font-family:'Liberation Sans', sans-serif;transform:scaleX(0.9300);-webkit-text-stroke:0.2px #222;">AH</span>
<span class="t" style="left:707.84px;top:207.00px;font-size:10.6px;color:#222;font-weight:normal;font-style:normal;font-family:'Liberation Sans', sans-serif;transform:scaleX(0.9300);-webkit-text-stroke:0.2px #222;">AI</span>
<span class="t" style="left:726.75px;top:207.00px;font-size:10.6px;color:#222;font-weight:normal;font-style:normal;font-family:'Liberation Sans', sans-serif;transform:scaleX(0.9300);-webkit-text-stroke:0.2px #222;">AJ</span>
<span class="t" style="left:745.92px;top:207.00px;font-size:10.6px;color:#222;font-weight:normal;font-style:normal;font-family:'Liberation Sans', sans-serif;transform:scaleX(0.9300);-webkit-text-stroke:0.2px #222;">AK</span>
<span class="t" style="left:766.47px;top:207.00px;font-size:10.6px;color:#222;font-weight:normal;font-style:normal;font-family:'Liberation Sans', sans-serif;transform:scaleX(0.9300);-webkit-text-stroke:0.2px #222;">AL</span>
<span class="t" style="left:784.30px;top:207.00px;font-size:10.6px;color:#222;font-weight:normal;font-style:normal;font-family:'Liberation Sans', sans-serif;transform:scaleX(0.9500);-webkit-text-stroke:0.2px #222;">AM</span>
<span class="t" style="left:8.49px;top:228.00px;font-size:10.6px;color:#1e7145;font-weight:normal;font-style:normal;font-family:'Liberation Sans', sans-serif;transform:scaleX(0.9500);-webkit-text-stroke:0.2px #1e7145;">1</span>
<span class="t" style="left:8.49px;top:248.00px;font-size:10.6px;color:#1e7145;font-weight:normal;font-style:normal;font-family:'Liberation Sans', sans-serif;transform:scaleX(0.9500);-webkit-text-stroke:0.2px #1e7145;">2</span>
<span class="t" style="left:8.49px;top:268.00px;font-size:10.6px;color:#1e7145;font-weight:normal;font-style:normal;font-family:'Liberation Sans', sans-serif;transform:scaleX(0.9500);-webkit-text-stroke:0.2px #1e7145;">3</span>
<span class="t" style="left:8.49px;top:288.00px;font-size:10.6px;color:#1e7145;font-weight:normal;font-style:normal;font-family:'Liberation Sans', sans-serif;transform:scaleX(0.9500);-webkit-text-stroke:0.2px #1e7145;">4</span>
<span class="t" style="left:8.49px;top:308.00px;font-size:10.6px;color:#1e7145;font-weight:normal;font-style:normal;font-family:'Liberation Sans', sans-serif;transform:scaleX(0.9500);-webkit-text-stroke:0.2px #1e7145;">5</span>
<span class="t" style="left:8.49px;top:328.00px;font-size:10.6px;color:#1e7145;font-weight:normal;font-style:normal;font-family:'Liberation Sans', sans-serif;transform:scaleX(0.9500);-webkit-text-stroke:0.2px #1e7145;">6</span>
<span class="t" style="left:8.49px;top:348.00px;font-size:10.6px;color:#1e7145;font-weight:normal;font-style:normal;font-family:'Liberation Sans', sans-serif;transform:scaleX(0.9500);-webkit-text-stroke:0.2px #1e7145;">7</span>
<span class="t" style="left:8.49px;top:368.00px;font-size:10.6px;color:#1e7145;font-weight:normal;font-style:normal;font-family:'Liberation Sans', sans-serif;transform:scaleX(0.9500);-webkit-text-stroke:0.2px #1e7145;">8</span>
<span class="t" style="left:8.49px;top:388.00px;font-size:10.6px;color:#1e7145;font-weight:normal;font-style:normal;font-family:'Liberation Sans', sans-serif;transform:scaleX(0.9500);-webkit-text-stroke:0.2px #1e7145;">9</span>
<span class="t" style="left:5.70px;top:408.00px;font-size:10.6px;color:#1e7145;font-weight:normal;font-style:normal;font-family:'Liberation Sans', sans-serif;transform:scaleX(0.9500);-webkit-text-stroke:0.2px #1e7145;">10</span>
<span class="t" style="left:6.08px;top:428.00px;font-size:10.6px;color:#1e7145;font-weight:normal;font-style:normal;font-family:'Liberation Sans', sans-serif;transform:scaleX(0.9500);-webkit-text-stroke:0.2px #1e7145;">11</span>
<span class="t" style="left:5.70px;top:448.00px;font-size:10.6px;color:#1e7145;font-weight:normal;font-style:normal;font-family:'Liberation Sans', sans-serif;transform:scaleX(0.9500);-webkit-text-stroke:0.2px #1e7145;">12</span>
<span class="t" style="left:5.70px;top:468.00px;font-size:10.6px;color:#1e7145;font-weight:normal;font-style:normal;font-family:'Liberation Sans', sans-serif;transform:scaleX(0.9500);-webkit-text-stroke:0.2px #1e7145;">13</span>
<span class="t" style="left:5.70px;top:488.00px;font-size:10.6px;color:#1e7145;font-weight:normal;font-style:normal;font-family:'Liberation Sans', sans-serif;transform:scaleX(0.9500);-webkit-text-stroke:0.2px #1e7145;">14</span>
<span class="t" style="left:5.70px;top:508.00px;font-size:10.6px;color:#1e7145;font-weight:normal;font-style:normal;font-family:'Liberation Sans', sans-serif;transform:scaleX(0.9500);-webkit-text-stroke:0.2px #1e7145;">15</span>
<span class="t" style="left:5.70px;top:528.00px;font-size:10.6px;color:#1e7145;font-weight:normal;font-style:normal;font-family:'Liberation Sans', sans-serif;transform:scaleX(0.9500);-webkit-text-stroke:0.2px #1e7145;">16</span>
<span class="t" style="left:5.70px;top:548.00px;font-size:10.6px;color:#1e7145;font-weight:normal;font-style:normal;font-family:'Liberation Sans', sans-serif;transform:scaleX(0.9500);-webkit-text-stroke:0.2px #1e7145;">17</span>
<span class="t" style="left:5.70px;top:568.00px;font-size:10.6px;color:#1e7145;font-weight:normal;font-style:normal;font-family:'Liberation Sans', sans-serif;transform:scaleX(0.9500);-webkit-text-stroke:0.2px #1e7145;">18</span>
<span class="t" style="left:5.70px;top:588.00px;font-size:10.6px;color:#1e7145;font-weight:normal;font-style:normal;font-family:'Liberation Sans', sans-serif;transform:scaleX(0.9500);-webkit-text-stroke:0.2px #1e7145;">19</span>
<span class="t" style="left:5.70px;top:608.00px;font-size:10.6px;color:#1e7145;font-weight:normal;font-style:normal;font-family:'Liberation Sans', sans-serif;transform:scaleX(0.9500);-webkit-text-stroke:0.2px #1e7145;">20</span>
<span class="t" style="left:5.70px;top:628.00px;font-size:10.6px;color:#1e7145;font-weight:normal;font-style:normal;font-family:'Liberation Sans', sans-serif;transform:scaleX(0.9500);-webkit-text-stroke:0.2px #1e7145;">21</span>
<span class="t" style="left:749.99px;top:228.00px;font-size:10.6px;color:#222;font-weight:normal;font-style:normal;font-family:'Liberation Sans', sans-serif;transform:scaleX(0.9500);-webkit-text-stroke:0.2px #222;">1</span>
<span class="t" style="left:749.99px;top:248.00px;font-size:10.6px;color:#222;font-weight:normal;font-style:normal;font-family:'Liberation Sans', sans-serif;transform:scaleX(0.9500);-webkit-text-stroke:0.2px #222;">2</span>
<span class="t" style="left:749.99px;top:268.00px;font-size:10.6px;color:#222;font-weight:normal;font-style:normal;font-family:'Liberation Sans', sans-serif;transform:scaleX(0.9500);-webkit-text-stroke:0.2px #222;">3</span>
<span class="t" style="left:749.99px;top:288.00px;font-size:10.6px;color:#222;font-weight:normal;font-style:normal;font-family:'Liberation Sans', sans-serif;transform:scaleX(0.9500);-webkit-text-stroke:0.2px #222;">4</span>
<span class="t" style="left:749.99px;top:308.00px;font-size:10.6px;color:#222;font-weight:normal;font-style:normal;font-family:'Liberation Sans', sans-serif;transform:scaleX(0.9500);-webkit-text-stroke:0.2px #222;">5</span>
<span class="t" style="left:749.99px;top:328.00px;font-size:10.6px;color:#222;font-weight:normal;font-style:normal;font-family:'Liberation Sans', sans-serif;transform:scaleX(0.9500);-webkit-text-stroke:0.2px #222;">6</span>
<span class="t" style="left:749.99px;top:348.00px;font-size:10.6px;color:#222;font-weight:normal;font-style:normal;font-family:'Liberation Sans', sans-serif;transform:scaleX(0.9500);-webkit-text-stroke:0.2px #222;">7</span>
<span class="t" style="left:749.99px;top:368.00px;font-size:10.6px;color:#222;font-weight:normal;font-style:normal;font-family:'Liberation Sans', sans-serif;transform:scaleX(0.9500);-webkit-text-stroke:0.2px #222;">8</span>
<span class="t" style="left:749.99px;top:388.00px;font-size:10.6px;color:#222;font-weight:normal;font-style:normal;font-family:'Liberation Sans', sans-serif;transform:scaleX(0.9500);-webkit-text-stroke:0.2px #222;">9</span>
<span class="t" style="left:747.20px;top:408.00px;font-size:10.6px;color:#222;font-weight:normal;font-style:normal;font-family:'Liberation Sans', sans-serif;transform:scaleX(0.9500);-webkit-text-stroke:0.2px #222;">10</span>
<span class="t" style="left:747.57px;top:428.00px;font-size:10.6px;color:#222;font-weight:normal;font-style:normal;font-family:'Liberation Sans', sans-serif;transform:scaleX(0.9500);-webkit-text-stroke:0.2px #222;">11</span>
<span class="t" style="left:747.20px;top:448.00px;font-size:10.6px;color:#222;font-weight:normal;font-style:normal;font-family:'Liberation Sans', sans-serif;transform:scaleX(0.9500);-webkit-text-stroke:0.2px #222;">12</span>
<span class="t" style="left:747.20px;top:468.00px;font-size:10.6px;color:#222;font-weight:normal;font-style:normal;font-family:'Liberation Sans', sans-serif;transform:scaleX(0.9500);-webkit-text-stroke:0.2px #222;">13</span>
<span class="t" style="left:747.20px;top:488.00px;font-size:10.6px;color:#222;font-weight:normal;font-style:normal;font-family:'Liberation Sans', sans-serif;transform:scaleX(0.9500);-webkit-text-stroke:0.2px #222;">14</span>
<span class="t" style="left:747.20px;top:508.00px;font-size:10.6px;color:#222;font-weight:normal;font-style:normal;font-family:'Liberation Sans', sans-serif;transform:scaleX(0.9500);-webkit-text-stroke:0.2px #222;">15</span>
<span class="t" style="left:747.20px;top:528.00px;font-size:10.6px;color:#222;font-weight:normal;font-style:normal;font-family:'Liberation Sans', sans-serif;transform:scaleX(0.9500);-webkit-text-stroke:0.2px #222;">16</span>
<span class="t" style="left:747.20px;top:548.00px;font-size:10.6px;color:#222;font-weight:normal;font-style:normal;font-family:'Liberation Sans', sans-serif;transform:scaleX(0.9500);-webkit-text-stroke:0.2px #222;">17</span>
<div id="dlg">
<div style="left:65.5px;top:268.4px;width:510.8px;height:364.6px;background:#f0f0f0;box-shadow:0 0 0 0.6px rgba(60,60,60,.55),0.5px 1.5px 7px 1px rgba(0,0,0,.55),1px 3px 22px 3px rgba(0,0,0,.28);"></div>
<div style="left:65.5px;top:268.4px;width:510.8px;height:30.6px;background:#fff;"></div>
<div style="left:72px;top:325px;width:498px;height:114px;background:#fff;border:2px solid #6d6d6d;border-right-color:#8a8a8a;border-bottom-color:#8a8a8a;"></div>
<div style="left:75px;top:345px;width:491px;height:1px;background:#e9e9e9;"></div>
<div style="left:75px;top:363px;width:491px;height:1px;background:#e9e9e9;"></div>
<div style="left:75px;top:381px;width:491px;height:1px;background:#e9e9e9;"></div>
<div style="left:75px;top:399px;width:491px;height:1px;background:#e9e9e9;"></div>
<div style="left:75px;top:417px;width:491px;height:1px;background:#e9e9e9;"></div>
<div style="left:75px;top:418px;width:491px;height:18px;background:#e1e1e6;"></div>
<div style="left:72px;top:471px;width:498px;height:129px;background:#fff;border:1px solid #a0a0a0;"></div>
<div style="left:81px;top:499px;width:478px;height:21px;background:#fff;border:1px solid #ababab;"></div>
<div style="left:537px;top:499px;width:22px;height:21px;background:#f7f7f7;border:2px solid #adadad;box-shadow:inset 0 0 0 1px #e3e3e3;"></div>
<div style="left:75px;top:536px;width:493px;height:1px;background:#c8c8c8;"></div>
<div style="left:143px;top:553px;width:316px;height:40px;background:#d8d8d8;border:1px solid #5c5c5c;box-shadow:inset 0 0 0 2px #fff;"></div>
<div style="left:469px;top:562px;width:89px;height:21px;background:#e1e1e1;border:2px solid #0078d7;"></div>
<div style="left:472px;top:565px;width:83px;height:15px;border:1px dotted #222;"></div>
<div style="left:405px;top:604px;width:74px;height:21px;background:#e1e1e1;border:1px solid #adadad;"></div>
<div style="left:490px;top:604px;width:74px;height:21px;background:#e1e1e1;border:1px solid #adadad;"></div>
</div>
<svg class="ov" width="800" height="643" viewBox="0 0 800 643">
<rect x="76.25" y="495.25" width="62.2" height="29.5" rx="1.6" fill="none" stroke="#fb0007" stroke-width="3.5"/>
<path d="M548.2 278.2L558.2 288.2M558.2 278.2L548.2 288.2" stroke="#111" stroke-width="1.1" fill="none"/>
<path d="M81.5 335.8L85.4 337.5H89.6V338.70000000000005H85.4L81.5 340.40000000000003Z" fill="#000" stroke="#000" stroke-width="0.35"/>
<path d="M81.5 353.8L85.4 355.5H89.6V356.70000000000005H85.4L81.5 358.40000000000003Z" fill="#000" stroke="#000" stroke-width="0.35"/>
<path d="M81.5 371.8L85.4 373.5H89.6V374.70000000000005H85.4L81.5 376.40000000000003Z" fill="#000" stroke="#000" stroke-width="0.35"/>
<path d="M81.5 389.8L85.4 391.5H89.6V392.70000000000005H85.4L81.5 394.40000000000003Z" fill="#000" stroke="#000" stroke-width="0.35"/>
<path d="M81.5 407.8L85.4 409.5H89.6V410.70000000000005H85.4L81.5 412.40000000000003Z" fill="#000" stroke="#000" stroke-width="0.35"/>
<path d="M81.5 425.8L85.4 427.5H89.6V428.70000000000005H85.4L81.5 430.40000000000003Z" fill="#000" stroke="#000" stroke-width="0.35"/>
<path d="M547 505.2V511.8" stroke="#000" stroke-width="1.9" fill="none"/><path d="M543.5 508.5L547 504.8L550.5 508.5" stroke="#000" stroke-width="1.8" fill="none" stroke-linejoin="miter"/><path d="M543 513.6H551" stroke="#000" stroke-width="1.2"/>
<rect x="572.3" y="623.4" width="1.8" height="1.8" fill="#bdbdbd"/><rect x="569.5" y="626.2" width="1.8" height="1.8" fill="#bdbdbd"/><rect x="572.3" y="626.2" width="1.8" height="1.8" fill="#bdbdbd"/><rect x="566.7" y="629" width="1.8" height="1.8" fill="#bdbdbd"/><rect x="569.5" y="629" width="1.8" height="1.8" fill="#bdbdbd"/><rect x="572.3" y="629" width="1.8" height="1.8" fill="#bdbdbd"/>
</svg>
<span class="t" style="left:74.50px;top:278.00px;font-size:12px;color:#0a0a0a;font-weight:normal;font-style:normal;font-family:'Liberation Sans', sans-serif;transform:scaleX(0.9774);-webkit-text-stroke:0.15px #0a0a0a;">Neue Formatierungsregel</span>
<span class="t" style="left:504.38px;top:277.00px;font-size:13px;color:#111;font-weight:normal;font-style:normal;font-family:'Liberation Sans', sans-serif;">?</span>
<span class="t" style="left:73.00px;top:311.00px;font-size:11.3px;color:#0a0a0a;font-weight:normal;font-style:normal;font-family:'Liberation Sans', sans-serif;transform:scaleX(1.0152);-webkit-text-stroke:0.25px #0a0a0a;">Regeltyp au<u>s</u>wählen:</span>
<span class="t" style="left:93.25px;top:333.00px;font-size:10.8px;color:#0a0a0a;font-weight:normal;font-style:normal;font-family:'Liberation Sans', sans-serif;transform:scaleX(1.0796);-webkit-text-stroke:0.25px #0a0a0a;">Alle Zellen basierend auf ihren Werten formatieren</span>
<span class="t" style="left:93.25px;top:351.00px;font-size:10.8px;color:#0a0a0a;font-weight:normal;font-style:normal;font-family:'Liberation Sans', sans-serif;transform:scaleX(1.0884);-webkit-text-stroke:0.25px #0a0a0a;">Nur Zellen formatieren, die enthalten</span>
<span class="t" style="left:93.25px;top:369.00px;font-size:10.8px;color:#0a0a0a;font-weight:normal;font-style:normal;font-family:'Liberation Sans', sans-serif;transform:scaleX(1.0885);-webkit-text-stroke:0.25px #0a0a0a;">Nur obere oder untere Werte formatieren</span>
<span class="t" style="left:93.25px;top:387.00px;font-size:10.8px;color:#0a0a0a;font-weight:normal;font-style:normal;font-family:'Liberation Sans', sans-serif;transform:scaleX(1.0898);-webkit-text-stroke:0.25px #0a0a0a;">Nur Werte über oder unter dem Durchschnitt formatieren</span>
<span class="t" style="left:93.25px;top:405.00px;font-size:10.8px;color:#0a0a0a;font-weight:normal;font-style:normal;font-family:'Liberation Sans', sans-serif;transform:scaleX(1.1018);-webkit-text-stroke:0.25px #0a0a0a;">Nur eindeutige oder doppelte Werte formatieren</span>
<span class="t" style="left:93.25px;top:423.00px;font-size:10.8px;color:#0a0a0a;font-weight:normal;font-style:normal;font-family:'Liberation Sans', sans-serif;transform:scaleX(1.0740);-webkit-text-stroke:0.25px #0a0a0a;">Formel zur Ermittlung der zu formatierenden Zellen verwenden</span>
<span class="t" style="left:73.30px;top:455.60px;font-size:11.3px;color:#0a0a0a;font-weight:normal;font-style:normal;font-family:'Liberation Sans', sans-serif;transform:scaleX(1.0258);-webkit-text-stroke:0.25px #0a0a0a;">R<u>e</u>gelbeschreibung bearbeiten:</span>
<span class="t" style="left:82.00px;top:481.00px;font-size:11px;color:#111;font-weight:bold;font-style:normal;font-family:'Liberation Sans', sans-serif;transform:scaleX(0.9905);">Werte f<u>o</u>rmatieren, für die diese Formel wahr ist:</span>
<span class="t" style="left:86.00px;top:504.60px;font-size:10.8px;color:#0a0a0a;font-weight:normal;font-style:normal;font-family:'Liberation Sans', sans-serif;transform:scaleX(1.0494);-webkit-text-stroke:0.2px #0a0a0a;">=A1=1</span>
<span class="t" style="left:82.00px;top:568.40px;font-size:11px;color:#111;font-weight:bold;font-style:normal;font-family:'Liberation Sans', sans-serif;transform:scaleX(0.9682);">Vorschau:</span>
<span class="t" style="left:264.00px;top:567.50px;font-size:12.3px;color:#0a0a0a;font-weight:normal;font-style:normal;font-family:'Liberation Sans', sans-serif;transform:scaleX(0.9915);-webkit-text-stroke:0.15px #0a0a0a;">AaBbCcYyZz</span>
<span class="t" style="left:478.00px;top:567.50px;font-size:11.3px;color:#0a0a0a;font-weight:normal;font-style:normal;font-family:'Liberation Sans', sans-serif;transform:scaleX(1.0096);-webkit-text-stroke:0.2px #0a0a0a;"><u>F</u>ormatieren...</span>
<span class="t" style="left:434.30px;top:609.70px;font-size:11.3px;color:#0a0a0a;font-weight:normal;font-style:normal;font-family:'Liberation Sans', sans-serif;transform:scaleX(0.9125);-webkit-text-stroke:0.2px #0a0a0a;">OK</span>
<span class="t" style="left:499.30px;top:609.70px;font-size:11.3px;color:#0a0a0a;font-weight:normal;font-style:normal;font-family:'Liberation Sans', sans-serif;transform:scaleX(1.0154);-webkit-text-stroke:0.2px #0a0a0a;">Abbrechen</span>
</div></body></html>
